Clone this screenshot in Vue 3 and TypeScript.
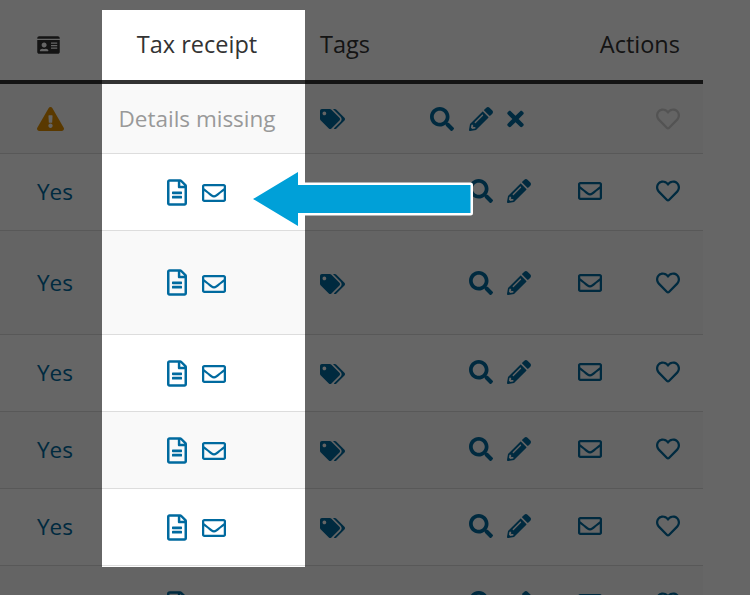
<script setup lang="ts">
interface Icon { vb: string; d: string }
const icons: Record<string, Icon> = {
  search: { vb: '0 0 512 512', d: 'M505 442.7L405.3 343c-4.5-4.5-10.6-7-17-7H372c27.6-35.3 44-79.7 44-128C416 93.1 322.9 0 208 0S0 93.1 0 208s93.1 208 208 208c48.3 0 92.7-16.4 128-44v16.3c0 6.4 2.5 12.5 7 17l99.7 99.7c9.4 9.4 24.6 9.4 33.9 0l28.3-28.3c9.4-9.4 9.4-24.6.1-34zM208 336c-70.7 0-128-57.2-128-128 0-70.7 57.2-128 128-128 70.7 0 128 57.2 128 128 0 70.7-57.2 128-128 128z' },
  pencil: { vb: '0 0 512 512', d: 'M497.9 142.1l-46.1 46.1c-4.7 4.7-12.3 4.7-17 0l-111-111c-4.7-4.7-4.7-12.3 0-17l46.1-46.1c18.7-18.7 49.1-18.7 67.9 0l60.1 60.1c18.8 18.7 18.8 49.1 0 67.9zM284.2 99.8L21.6 362.4.4 483.9c-2.9 16.4 11.4 30.6 27.8 27.8l121.5-21.3 262.6-262.6c4.7-4.7 4.7-12.3 0-17l-111-111c-4.8-4.7-12.4-4.7-17.1 0zM124.1 339.9c-5.5-5.5-5.5-14.3 0-19.8l154-154c5.5-5.5 14.3-5.5 19.8 0s5.5 14.3 0 19.8l-154 154c-5.5 5.5-14.3 5.5-19.8 0zM88 424h48v36.3l-64.5 11.3-31.1-31.1L51.7 376H88v48z' },
  times: { vb: '0 0 352 512', d: 'M242.72 256l100.07-100.07c12.28-12.28 12.28-32.19 0-44.48l-22.24-22.24c-12.28-12.28-32.19-12.28-44.48 0L176 189.28 75.93 89.21c-12.28-12.28-32.19-12.28-44.48 0L9.21 111.45c-12.28 12.28-12.28 32.19 0 44.48L109.28 256 9.21 356.07c-12.28 12.28-12.28 32.19 0 44.48l22.24 22.24c12.28 12.28 32.2 12.28 44.48 0L176 322.72l100.07 100.07c12.28 12.28 32.2 12.28 44.48 0l22.24-22.24c12.28-12.28 12.28-32.19 0-44.48L242.72 256z' },
  tags: { vb: '0 0 640 512', d: 'M497.941 225.941L286.059 14.059A48 48 0 0 0 252.118 0H48C21.49 0 0 21.49 0 48v204.118a48 48 0 0 0 14.059 33.941l211.882 211.882c18.744 18.745 49.136 18.746 67.882 0l204.118-204.118c18.745-18.745 18.745-49.137 0-67.882zM112 160c-26.51 0-48-21.49-48-48s21.49-48 48-48 48 21.49 48 48-21.49 48-48 48zm513.941 133.823L421.823 497.941c-18.745 18.745-49.137 18.745-67.882 0l-.36-.36L527.64 323.522c16.999-16.999 26.36-39.6 26.36-63.64s-9.362-46.641-26.36-63.64L331.397 0h48.721a48 48 0 0 1 33.941 14.059l211.882 211.882c18.745 18.745 18.745 49.137 0 67.882z' },
  heart: { vb: '0 0 512 512', d: 'M458.4 64.3C400.6 15.7 311.3 23 256 79.3 200.7 23 111.4 15.6 53.6 64.3-21.6 127.6-10.6 230.8 43 285.5l175.4 178.7c10 10.2 23.4 15.9 37.6 15.9 14.3 0 27.6-5.6 37.6-15.8L469 285.6c53.5-54.7 64.7-157.9-10.6-221.3zm-23.6 187.5L259.4 430.5c-2.4 2.4-4.4 2.4-6.8 0L77.2 251.8c-36.5-37.2-43.9-107.6 7.3-150.7 38.9-32.7 98.9-27.8 136.5 10.5l35 35.7 35-35.7c37.8-38.5 97.8-43.2 136.5-10.6 51.1 43.1 43.5 113.9 7.3 150.8z' },
  envelope: { vb: '0 0 512 512', d: 'M464 64H48C21.49 64 0 85.49 0 112v288c0 26.51 21.49 48 48 48h416c26.51 0 48-21.49 48-48V112c0-26.51-21.49-48-48-48zm0 48v40.805c-22.422 18.259-58.168 46.651-134.587 106.49-16.841 13.247-50.201 45.072-73.413 44.701-23.208.375-56.579-31.459-73.413-44.701C106.18 199.465 70.425 171.067 48 152.805V112h416zM48 400V214.398c22.914 18.251 55.409 43.862 104.938 82.646 21.857 17.205 60.134 55.186 103.062 54.955 42.717.231 80.509-37.199 103.053-54.947 49.528-38.783 82.032-64.401 104.947-82.653V400H48z' },
  file: { vb: '0 0 384 512', d: 'M288 248v28c0 6.6-5.4 12-12 12H108c-6.6 0-12-5.4-12-12v-28c0-6.6 5.4-12 12-12h168c6.6 0 12 5.4 12 12zm-12 72H108c-6.6 0-12 5.4-12 12v28c0 6.6 5.4 12 12 12h168c6.6 0 12-5.4 12-12v-28c0-6.6-5.4-12-12-12zm108-188.1V464c0 26.5-21.5 48-48 48H48c-26.5 0-48-21.5-48-48V48C0 21.5 21.5 0 48 0h204.1C264.8 0 277 5.1 286 14.1L369.9 98c9 8.9 14.1 21.2 14.1 33.9zm-128-80V128h76.1L256 51.9zM336 464V176H232c-13.3 0-24-10.7-24-24V48H48v416h288z' },
  warning: { vb: '0 0 576 512', d: 'M569.517 440.013C587.975 472.007 564.806 512 527.94 512H48.054c-36.937 0-59.999-40.055-41.577-71.987L246.423 24.035c18.467-32.009 64.72-31.951 83.154 0l239.94 416zM288 354c-25.405 0-46 20.595-46 46s20.595 46 46 46 46-20.595 46-46-20.595-46-46-46zm-43.673-165.346l7.418 136c.347 6.364 5.609 11.346 11.982 11.346h48.546c6.373 0 11.635-4.982 11.982-11.346l7.418-136c.375-6.874-5.098-12.654-11.982-12.654h-63.383c-6.884 0-12.356 5.78-11.981 12.654z' },
  idcard: { vb: '0 0 576 512', d: 'M528 32H48C21.5 32 0 53.5 0 80v16h576V80c0-26.5-21.5-48-48-48zM0 432c0 26.5 21.5 48 48 48h480c26.5 0 48-21.5 48-48V128H0v304zm352-232c0-4.4 3.6-8 8-8h144c4.4 0 8 3.6 8 8v16c0 4.4-3.6 8-8 8H360c-4.4 0-8-3.6-8-8v-16zm0 64c0-4.4 3.6-8 8-8h144c4.4 0 8 3.6 8 8v16c0 4.4-3.6 8-8 8H360c-4.4 0-8-3.6-8-8v-16zm0 64c0-4.4 3.6-8 8-8h144c4.4 0 8 3.6 8 8v16c0 4.4-3.6 8-8 8H360c-4.4 0-8-3.6-8-8v-16zM176 192c35.3 0 64 28.7 64 64s-28.7 64-64 64-64-28.7-64-64 28.7-64 64-64zM67.1 396.2C75.5 370.5 99.6 352 128 352h8.2c12.3 5.1 25.7 8 39.8 8s27.6-2.9 39.8-8h8.2c28.4 0 52.5 18.5 60.9 44.2 3.2 9.9-5.2 19.8-15.6 19.8H82.7c-10.4 0-18.8-10-15.6-19.8z' },
}

interface Row { id: number; height: string; striped: boolean; lit: boolean; hasTags: boolean }
const rows: Row[] = [
  { id: 2, height: 'h-std', striped: false, lit: true, hasTags: false },
  { id: 3, height: 'h-tall', striped: true, lit: true, hasTags: true },
  { id: 4, height: 'h-std', striped: false, lit: true, hasTags: true },
  { id: 5, height: 'h-std', striped: true, lit: true, hasTags: true },
  { id: 6, height: 'h-std', striped: false, lit: true, hasTags: true },
  { id: 7, height: 'h-std', striped: true, lit: false, hasTags: false },
]
</script>

<template>
  <div class="page">
    <div class="table">
      <div class="row head">
        <div class="cell first">
          <svg class="i-idcard" :viewBox="icons.idcard.vb"><path :d="icons.idcard.d" /></svg>
        </div>
        <div class="cell tax lit"><span class="head-text">Tax receipt</span></div>
        <div class="cell tags-head">
          <span class="head-text">Tags</span>
          <span class="head-text">Actions</span>
        </div>
      </div>

      <div class="row h-first striped">
        <div class="cell first">
          <svg class="i-warning" :viewBox="icons.warning.vb"><path :d="icons.warning.d" /></svg>
        </div>
        <div class="cell tax lit"><span class="missing">Details missing</span></div>
        <div class="cell tags">
          <svg class="i-tags" :viewBox="icons.tags.vb"><path :d="icons.tags.d" /></svg>
        </div>
        <div class="cell actions">
          <svg class="i-std a1" :viewBox="icons.search.vb"><path :d="icons.search.d" /></svg>
          <svg class="i-std a2" :viewBox="icons.pencil.vb"><path :d="icons.pencil.d" /></svg>
          <svg class="i-times a3" :viewBox="icons.times.vb"><path :d="icons.times.d" /></svg>
          <svg class="i-std a5 faded" :viewBox="icons.heart.vb"><path :d="icons.heart.d" /></svg>
        </div>
      </div>

      <div v-for="r in rows" :key="r.id" class="row" :class="[r.height, { striped: r.striped }]">
        <div class="cell first"><span v-if="r.id < 7" class="yes">Yes</span></div>
        <div class="cell tax" :class="{ lit: r.lit, end: r.id === 6 }">
          <div class="tax-icons">
            <svg class="i-file" :viewBox="icons.file.vb"><path :d="icons.file.d" /></svg>
            <svg class="i-std i-mail" :viewBox="icons.envelope.vb"><path :d="icons.envelope.d" /></svg>
          </div>
        </div>
        <div class="cell tags">
          <svg v-if="r.hasTags" class="i-tags i-tags-low" :viewBox="icons.tags.vb"><path :d="icons.tags.d" /></svg>
        </div>
        <div class="cell actions">
          <svg class="i-std a2" :viewBox="icons.search.vb"><path :d="icons.search.d" /></svg>
          <svg class="i-std a3" :viewBox="icons.pencil.vb"><path :d="icons.pencil.d" /></svg>
          <svg class="i-std a4" :viewBox="icons.envelope.vb"><path :d="icons.envelope.d" /></svg>
          <svg class="i-std a5" :viewBox="icons.heart.vb"><path :d="icons.heart.d" /></svg>
        </div>
      </div>
    </div>

    <div class="dim"></div>

    <svg class="arrow" viewBox="0 0 230 65">
      <polygon points="3,29 48,2 48,15 220.5,15 220.5,43 48,43 48,56" />
    </svg>
  </div>
</template>

<style>
html, body { margin: 0; background: #fff; overflow: hidden; }
</style>

<style scoped>
.page {
  position: relative;
  width: 750px;
  height: 595px;
  overflow: hidden;
  background: #fff;
  font-family: "Open Sans", sans-serif;
  color: #333;
}
.table { width: 703px; }
.row {
  display: grid;
  grid-template-columns: 102px 203px 125px 1fr;
}
.cell {
  display: flex;
  align-items: center;
  box-sizing: border-box;
  border-bottom: 1px solid #ddd;
  background: #fff;
}
.striped .cell { background: #f9f9f9; }
.head { height: 84px; grid-template-columns: 102px 203px 1fr; }
.head .cell { margin-top: 10px; border-bottom: 4px solid #333; }
.head-text { font-size: 23.5px; padding-bottom: 3px; }
.h-first { height: 70px; }
.h-std { height: 77px; }
.h-tall { height: 104px; }
.first { padding-left: 37px; }
.yes { color: #006a9f; font-size: 22.5px; padding-bottom: 1px; }
.tax {
  justify-content: center;
  padding-right: 13px;
}
.lit { position: relative; z-index: 2; }
.end { box-shadow: 0 1px 0 #fff; }
.missing { color: #999; font-size: 22.5px; }
.tax-icons { display: flex; align-items: center; gap: 15px; margin-right: 2px; }
.i-mail { margin-top: 2px; }
.tags-head {
  justify-content: space-between;
  padding-left: 15px;
  padding-right: 23px;
}
.tags { padding-left: 15px; }
.i-tags-low { margin-top: 2px; }
.actions {
  display: grid;
  grid-template-columns: 39px 38px 71px 78px 24px;
  justify-content: start;
}
.h-std .actions { padding-bottom: 2px; }
.a1 { grid-column: 1; }
.a2 { grid-column: 2; }
.a3 { grid-column: 3; }
.a4 { grid-column: 4; }
.a5 { grid-column: 5; }
svg { display: block; fill: currentColor; }
.actions svg, .tags svg { color: #006a9f; }
.actions .faded { color: #cfcfcf; }
.tax svg { color: #006a9f; }
.i-std { width: 24px; height: 24px; }
.i-times { width: 17px; height: 24px; }
.i-tags { width: 25px; height: 20px; }
.i-file { width: 20px; height: 27px; }
.i-warning { width: 27px; height: 24px; color: #e09000; }
.i-idcard { width: 23px; height: 20px; color: #333; }
.dim {
  position: absolute;
  inset: 0;
  z-index: 1;
  background: rgba(0, 0, 0, 0.6);
}
.arrow {
  position: absolute;
  left: 250px;
  top: 170px;
  width: 230px;
  height: 65px;
  z-index: 3;
}
.arrow polygon {
  fill: #00a0d8;
  stroke: #fff;
  stroke-width: 5;
  stroke-linejoin: round;
  paint-order: stroke;
}
</style>
